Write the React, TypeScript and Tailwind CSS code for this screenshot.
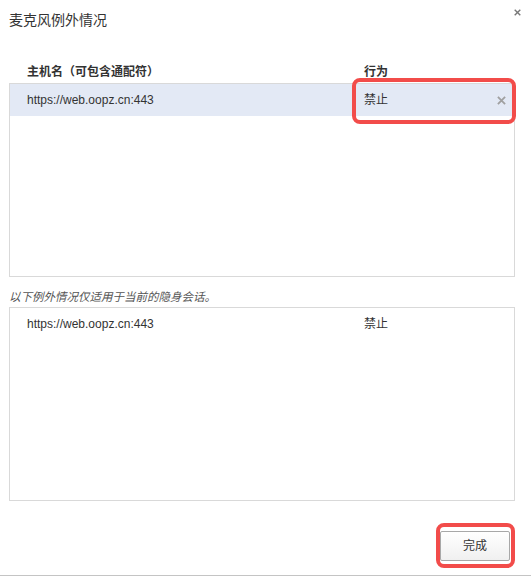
const font = { fontFamily: '"Liberation Sans", "Noto Sans CJK SC", sans-serif' };

function Cross({ className }: { className: string }) {
  return (
    <svg viewBox="0 0 10 10" className={className} fill="none" stroke="currentColor" strokeWidth="2">
      <path d="M1 1 L9 9 M9 1 L1 9" />
    </svg>
  );
}

function ExceptionRow({ removable }: { removable?: boolean }) {
  return (
    <div className={`flex items-center h-[32px] text-[12px] text-[#333] ${removable ? 'bg-[#e3e9f5]' : ''}`}>
      <div className="w-[354px] pl-[17px]">https://web.oopz.cn:443</div>
      <div className="flex-1">禁止</div>
      {removable && <Cross className="w-[9px] h-[9px] mr-[8px] text-[#a0a0a0]" />}
    </div>
  );
}

export default function App() {
  return (
    <div className="relative w-[531px] h-[576px] bg-white flex flex-col" style={font}>
      {/* Title */}
      <div className="relative h-[40px] pl-[9px] pt-[10px]">
        <h1 className="text-[14px] leading-[20px] text-[#333]">麦克风例外情况</h1>
        <Cross className="absolute right-[10px] top-[9px] w-[7px] h-[7px] text-[#777]" />
      </div>

      {/* Column header */}
      <div className="flex items-center h-[20px] mt-[22px] mb-[1px] ml-[10px] text-[12px] font-bold text-[#333]">
        <div className="w-[354px] pl-[17px]">主机名（可包含通配符）</div>
        <div className="flex-1">行为</div>
      </div>

      <div className="ml-[9px] w-[506px] h-[194px] border border-[#d9d9d9]">
        <ExceptionRow removable />
      </div>

      <p className="pl-[9px] h-[30px] pt-[11px] text-[11.5px] leading-[18px] italic text-[#555]">
        以下例外情况仅适用于当前的隐身会话。
      </p>

      <div className="ml-[9px] w-[506px] h-[194px] border border-[#d9d9d9]">
        <ExceptionRow />
      </div>

      {/* Footer */}
      <div className="flex justify-end pr-[21px] mt-[30px]">
        <button
          type="button"
          className="w-[70px] h-[30px] border border-[#a8a8a8] rounded-[2px] bg-gradient-to-b from-white to-[#f0f0f0] text-[12px] text-[#333]"
        >
          完成
        </button>
      </div>

      <div className="absolute left-0 right-0 bottom-0 h-[1px] bg-[#c4c4c4]" />

      {/* Highlight marks */}
      <div className="absolute left-[352px] top-[78px] w-[164px] h-[46px] border-[4px] border-[#f24c4a] rounded-[8px]" />
      <div className="absolute left-[436px] top-[523px] w-[79px] h-[45px] border-[4px] border-[#f24c4a] rounded-[8px]" />
    </div>
  );
}
